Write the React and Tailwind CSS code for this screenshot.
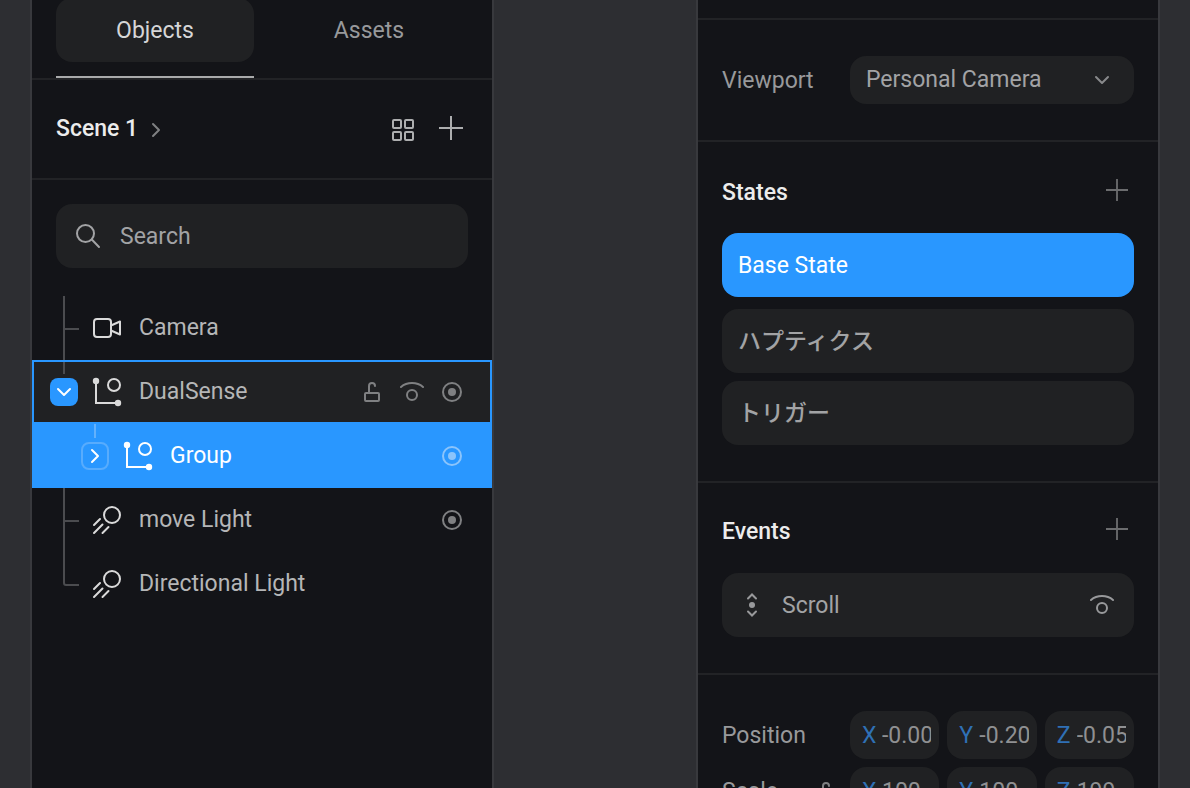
import React from 'react';

function Plus({ className }) {
  return (
    <svg className={className} viewBox="0 0 24 24" fill="none" stroke="currentColor" strokeWidth="2" aria-hidden="true">
      <path d="M12 0v24M0 12h24" />
    </svg>
  );
}

function Chevron({ className }) {
  return (
    <svg className={className} viewBox="0 0 16 16" fill="none" stroke="currentColor" strokeWidth="2" strokeLinecap="round" strokeLinejoin="round" aria-hidden="true">
      <path d="M2 5 8 11 14 5" />
    </svg>
  );
}

function GridIcon() {
  return (
    <svg className="w-6 h-6" viewBox="0 0 24 24" fill="none" stroke="currentColor" strokeWidth="2" aria-hidden="true">
      <rect x="2" y="2" width="8" height="8" rx="1" />
      <rect x="14" y="2" width="8" height="8" rx="1" />
      <rect x="2" y="14" width="8" height="8" rx="1" />
      <rect x="14" y="14" width="8" height="8" rx="1" />
    </svg>
  );
}

function SearchIcon() {
  return (
    <svg className="w-8 h-8 shrink-0" viewBox="0 0 32 32" fill="none" stroke="currentColor" strokeWidth="2" strokeLinecap="round" aria-hidden="true">
      <circle cx="13.5" cy="13.5" r="8.5" />
      <path d="M19.8 19.5 27 27" />
    </svg>
  );
}

function CameraIcon() {
  return (
    <svg className="w-8 h-8 shrink-0" viewBox="0 0 32 32" fill="none" stroke="currentColor" strokeWidth="2" strokeLinejoin="round" aria-hidden="true">
      <rect x="3" y="7" width="17" height="18" rx="3" />
      <path d="M20 13.5 29 9.5v13l-9-4" />
    </svg>
  );
}

function GroupIcon() {
  return (
    <svg className="w-8 h-8 shrink-0" viewBox="0 0 32 32" fill="none" stroke="currentColor" strokeWidth="2" aria-hidden="true">
      <path d="M5 5v22h22" />
      <circle cx="5" cy="5" r="3.2" fill="currentColor" stroke="none" />
      <circle cx="27" cy="27" r="3.2" fill="currentColor" stroke="none" />
      <circle cx="23" cy="9" r="6" />
    </svg>
  );
}

function LightIcon() {
  return (
    <svg className="w-8 h-8 shrink-0" viewBox="0 0 32 32" fill="none" stroke="currentColor" strokeWidth="2" strokeLinecap="round" aria-hidden="true">
      <circle cx="21" cy="11" r="8" />
      <path d="M9 15l-6 6M11.500 20.500 3 29M17.500 23 11.500 29" />
    </svg>
  );
}

function LockIcon({ className }) {
  return (
    <svg className={className} viewBox="0 0 24 24" fill="none" stroke="currentColor" strokeWidth="2" strokeLinecap="round" aria-hidden="true">
      <rect x="5" y="13" width="14" height="8" rx="1" />
      <path d="M9 13V6a3 3 0 0 1 6 0" />
    </svg>
  );
}

function EyeIcon() {
  return (
    <svg className="w-6 h-6" viewBox="0 0 24 24" fill="none" stroke="currentColor" strokeWidth="2" strokeLinecap="round" aria-hidden="true">
      <path d="M1 7C7 1.800 17 1.800 23 7" />
      <circle cx="12" cy="15" r="5" />
    </svg>
  );
}

function TargetIcon() {
  return (
    <svg className="w-6 h-6" viewBox="0 0 24 24" fill="none" stroke="currentColor" strokeWidth="2" aria-hidden="true">
      <circle cx="12" cy="12" r="9" />
      <circle cx="12" cy="12" r="4" fill="currentColor" stroke="none" />
    </svg>
  );
}

function ScrollIcon() {
  return (
    <svg className="w-3 h-6 shrink-0" viewBox="0 0 12 24" fill="none" stroke="currentColor" strokeWidth="2" strokeLinecap="round" aria-hidden="true">
      <path d="M2 5.500 6 1.500l4 4M2 18.500l4 4 4-4" />
      <circle cx="6" cy="12" r="3" fill="currentColor" stroke="none" />
    </svg>
  );
}

// tree connector drawn in front of a leaf row
function Guide({ last }) {
  return (
    <svg className="w-[35px] h-16 shrink-0 text-[#4b4c4f]" viewBox="0 0 35 64" fill="none" stroke="currentColor" strokeWidth="2" aria-hidden="true">
      {last ? <path d="M8 0v31q0 2 2 2h13" /> : <path d="M8 0v64M8 33h15" />}
    </svg>
  );
}

function IconButton({ label, children }) {
  return (
    <button type="button" aria-label={label} className="flex items-center justify-center w-10 h-10">
      {children}
    </button>
  );
}

function LeafRow({ icon, label, last, target }) {
  return (
    <li className="flex items-center h-16 pl-6 pr-5 text-[#dadada]">
      <Guide last={last} />
      {icon}
      <span className="ml-4 flex-1 text-[#b5b6b7] whitespace-nowrap">{label}</span>
      {target && (
        <span className="text-[#7f8082]">
          <IconButton label={`Target ${label}`}><TargetIcon /></IconButton>
        </span>
      )}
    </li>
  );
}

function ObjectsPanel() {
  return (
    <aside className="h-full overflow-hidden bg-[#131418] border-x-2 border-[#38393d]">
      <div className="-mt-0.5 px-6 grid grid-cols-2 gap-4 border-b-2 border-[#222326]">
        <div className="pb-3.5 border-b-2 border-[#a9aaab]">
          <button type="button" className="w-full h-16 pt-0.5 rounded-2xl bg-[#202123] text-[#d6d6d7]">Objects</button>
        </div>
        <button type="button" className="w-full h-16 pt-0.5 text-[#98999b]">Assets</button>
      </div>

      <div className="flex items-center justify-between px-6 h-25 border-b-2 border-[#222326]">
        <button type="button" className="flex items-center gap-2.5 font-medium text-[#ececec]">
          Scene 1
          <Chevron className="w-4 h-4 mt-0.5 -rotate-90 text-[#7f8082]" />
        </button>
        <div className="flex items-center gap-1 -mr-[5px] text-[#adaeaf]">
          <button type="button" aria-label="Scene grid" className="flex items-center justify-center w-11 h-10 pt-0.5"><GridIcon /></button>
          <button type="button" aria-label="Add object" className="flex items-center justify-center w-11 h-10 pb-0.5"><Plus className="w-6 h-6" /></button>
        </div>
      </div>

      <div className="px-6 pt-6">
        <label className="flex items-center gap-4 h-16 px-4 rounded-2xl bg-[#202123] text-[#a2a3a5]">
          <SearchIcon />
          <input type="text" aria-label="Search" placeholder="Search" className="w-full min-w-0 pt-0.5 bg-transparent outline-none placeholder:text-[#a2a3a5]" />
        </label>
      </div>

      <ul className="mt-7">
        <LeafRow icon={<CameraIcon />} label="Camera" />
        <li className="relative flex items-center h-16 pl-4 pr-[18px] border-2 border-[#2997ff] bg-[#202123] text-[#dadada]">
          <span className="absolute left-[29px] top-0 w-0.5 h-3 bg-[#4b4c4f]" />
          <button type="button" aria-label="Collapse DualSense" aria-expanded="true" className="flex items-center justify-center w-7 h-7 rounded-lg bg-[#2997ff] text-white">
            <Chevron className="w-4 h-4" />
          </button>
          <span className="ml-[13px]"><GroupIcon /></span>
          <span className="ml-4 flex-1 text-[#b5b6b7]">DualSense</span>
          <span className="flex text-[#7f8082]">
            <IconButton label="Lock DualSense"><LockIcon className="w-6 h-6" /></IconButton>
            <IconButton label="Hide DualSense"><EyeIcon /></IconButton>
            <IconButton label="Target DualSense"><TargetIcon /></IconButton>
          </span>
        </li>
        <li className="relative flex items-center h-16 pl-[49px] pr-5 bg-[#2997ff] text-white">
          <span className="absolute left-[62px] top-0 w-0.5 h-3.5 bg-[#63b1fc]" />
          <button type="button" aria-label="Expand Group" aria-expanded="false" className="flex items-center justify-center w-7 h-7 rounded-lg border-2 border-[#58acfd]">
            <Chevron className="w-4 h-4 shrink-0 -rotate-90" />
          </button>
          <span className="ml-[13px]"><GroupIcon /></span>
          <span className="ml-4 flex-1">Group</span>
          <span className="text-[#8bc4fb]">
            <IconButton label="Target Group"><TargetIcon /></IconButton>
          </span>
        </li>
        <LeafRow icon={<LightIcon />} label="move Light" target />
        <LeafRow icon={<LightIcon />} label="Directional Light" last />
      </ul>
    </aside>
  );
}

function VectorRow({ name, values, lock }) {
  return (
    <div className="flex items-center">
      <div className="flex items-center justify-between w-32 pt-0.5 pr-3 shrink-0">
        {name}
        {lock && <LockIcon className="w-6 h-6 text-[#7f8082]" />}
      </div>
      <div className="grid grid-cols-3 gap-2 flex-1 min-w-0">
        {['X', 'Y', 'Z'].map((axis, i) => (
          <label key={axis} className="flex items-center gap-1 h-12 pt-0.5 pl-3 pr-2 min-w-0 rounded-2xl bg-[#202123] text-[#2f70b5]">
            <span className="w-4 shrink-0">{axis}</span>
            <input type="text" aria-label={`${name} ${axis}`} defaultValue={values[i]} className="w-full min-w-0 bg-transparent outline-none text-[#8f9092]" />
          </label>
        ))}
      </div>
    </div>
  );
}

function SectionHeader({ title, label }) {
  return (
    <div className="flex items-start justify-between">
      <h2 className="leading-[42px] font-medium text-[#ececec]">{title}</h2>
      <button type="button" aria-label={label} className="flex items-center justify-center w-[34px] h-9 text-[#6b6c6e]">
        <Plus className="w-[22px] h-[22px]" />
      </button>
    </div>
  );
}

function PropertiesPanel() {
  return (
    <aside className="h-full overflow-hidden bg-[#131418] border-x-2 border-[#38393d] text-[#98999b]">
      <div className="h-5 border-b-2 border-[#222326]" />

      <div className="flex items-center px-6 py-9 border-b-2 border-[#222326]">
        <label htmlFor="viewport" className="w-32 pt-0.5 shrink-0">Viewport</label>
        <div className="relative flex-1 min-w-0">
          <select id="viewport" className="appearance-none block w-full h-12 pl-4 pr-12 rounded-2xl bg-[#202123] text-[#a2a3a5]">
            <option>Personal Camera</option>
          </select>
          <Chevron className="absolute right-6 top-4 w-4 h-4 pointer-events-none text-[#88898b]" />
        </div>
      </div>

      <section className="px-6 pt-[30px] pb-9 border-b-2 border-[#222326]">
        <SectionHeader title="States" label="Add state" />
        <button type="button" className="block w-full h-16 px-4 pt-0.5 mt-[19px] mb-3 rounded-2xl text-left bg-[#2997ff] text-white">Base State</button>
        <button type="button" className="block w-full h-16 px-4 pt-0.5 mb-2 rounded-2xl text-left font-medium bg-[#202123] text-[#a2a3a5]">ハプティクス</button>
        <button type="button" className="block w-full h-16 px-4 pt-0.5 rounded-2xl text-left font-medium bg-[#202123] text-[#a2a3a5]">トリガー</button>
      </section>

      <section className="px-6 pt-7 pb-9 border-b-2 border-[#222326]">
        <SectionHeader title="Events" label="Add event" />
        <div className="flex items-center h-16 mt-5 pl-6 pr-3 rounded-2xl bg-[#202123]">
          <ScrollIcon />
          <span className="ml-6 pt-0.5 flex-1 text-[#a2a3a5]">Scroll</span>
          <IconButton label="Hide Scroll event"><EyeIcon /></IconButton>
        </div>
      </section>

      <section className="flex flex-col gap-2 px-6 py-9">
        <VectorRow name="Position" values={['-0.00', '-0.20', '-0.05']} />
        <VectorRow name="Scale" values={['100', '100', '199']} lock />
      </section>
    </aside>
  );
}

export default function App() {
  return (
    <main className="grid grid-cols-[464fr_202fr_464fr] h-screen overflow-hidden px-[30px] bg-[#2d2e32] font-[Roboto,'Noto_Sans_CJK_JP',sans-serif] text-[23px] leading-8">
      <ObjectsPanel />
      <div />
      <PropertiesPanel />
    </main>
  );
}
